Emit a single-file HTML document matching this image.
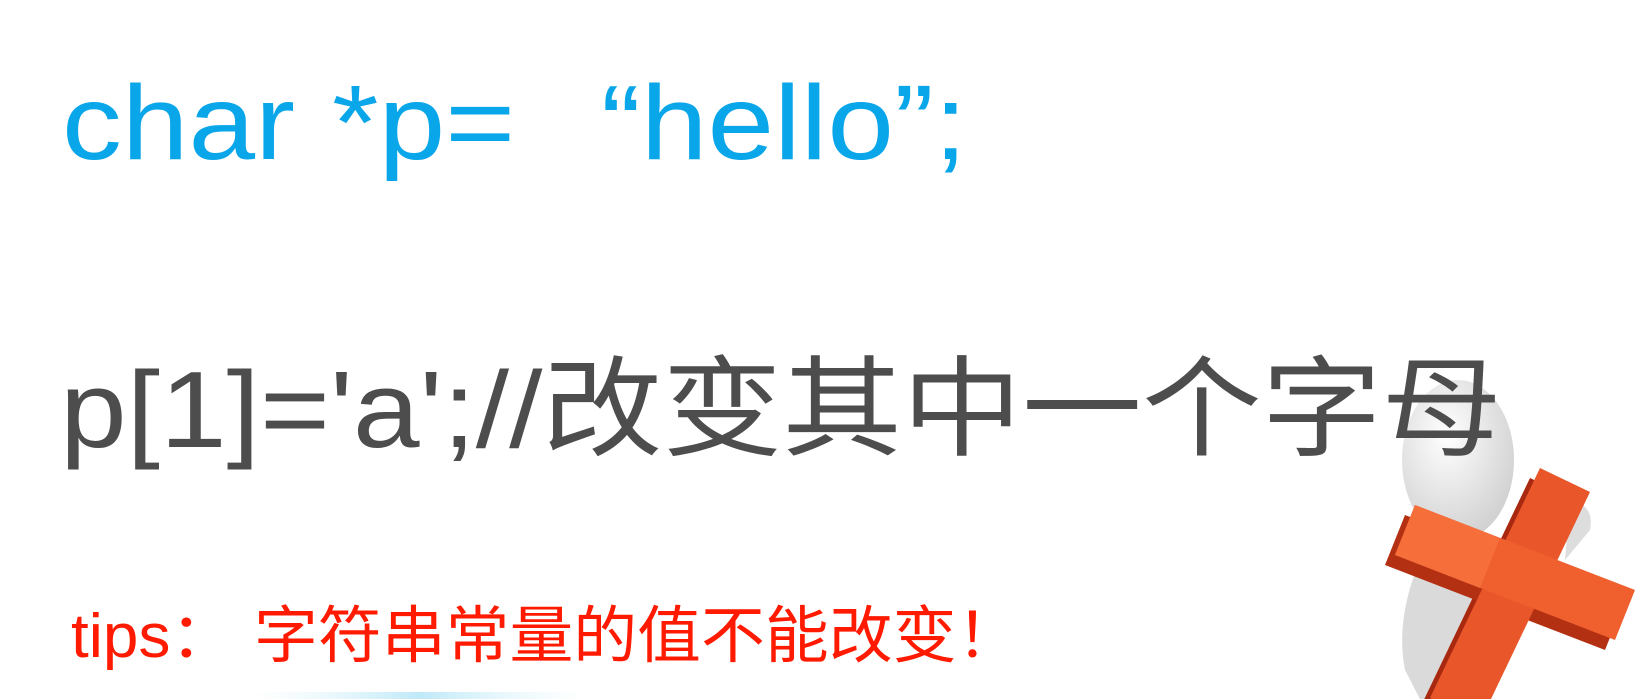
<!DOCTYPE html>
<html><head><meta charset="utf-8"><style>
html,body{margin:0;padding:0;background:#fff;width:1639px;height:699px;overflow:hidden;position:relative}
.t{position:absolute;white-space:pre;line-height:1;transform-origin:0 0}
.l1{font-family:"Liberation Sans",sans-serif;font-size:106px;color:#0aa6ea;transform:scaleX(1.13)}
.l2{font-family:"Liberation Sans","Noto Sans CJK SC",sans-serif;font-size:109px;color:#4d4d4d;transform:scaleX(1.1)}
.l3{font-family:"Liberation Sans","Noto Sans CJK SC",sans-serif;font-size:62px;color:#ff1a00;transform:scaleX(1.03)}
</style></head><body>
<svg width="1639" height="699" style="position:absolute;left:0;top:0">
<defs>
<radialGradient id="hd" cx="0.4" cy="0.35" r="0.7"><stop offset="0" stop-color="#fff"/><stop offset="1" stop-color="#cfcfcf"/></radialGradient>
<linearGradient id="bt" x1="0" y1="0" x2="1" y2="0"><stop offset="0" stop-color="#e6f7fc" stop-opacity="0"/><stop offset="0.5" stop-color="#bfe9f7"/><stop offset="1" stop-color="#e6f7fc" stop-opacity="0"/></linearGradient>
</defs>
<rect x="250" y="692" width="340" height="7" fill="url(#bt)"/>
<ellipse cx="1458" cy="460" rx="56" ry="80" fill="url(#hd)"/>
<path d="M1420 560 Q1395 620 1405 670 L1420 699 L1470 699 L1480 620 Q1470 570 1455 555 Z" fill="#dadada"/>
<path d="M1570 500 Q1595 505 1590 530 L1565 560 Z" fill="#ddd"/>
<polygon points="1530,478 1580,502 1470,732 1420,708" fill="#a8290f"/>
<polygon points="1405,515 1625,600 1605,650 1385,565" fill="#b33012"/>
<polygon points="1540,468 1590,492 1480,722 1430,698" fill="#e9562a"/>
<polygon points="1415,505 1635,590 1615,640 1395,555" fill="#f0602f"/>
<polygon points="1415,505 1500,538 1480,588 1395,555" fill="#f66e3a"/>
</svg>
<div class="t l1" style="left:62px;top:70px">char</div>
<div class="t l1" style="left:332px;top:70px">*p=</div>
<div class="t l1" style="left:601px;top:70px">“hello”;</div>
<div class="t l2" style="left:60px;top:356px">p[1]='a';//改变其中一个字母</div>
<div class="t l3" style="left:71px;top:606px">tips：</div>
<div class="t l3" style="left:254px;top:606px">字符串常量的值不能改变！</div>
</body></html>
